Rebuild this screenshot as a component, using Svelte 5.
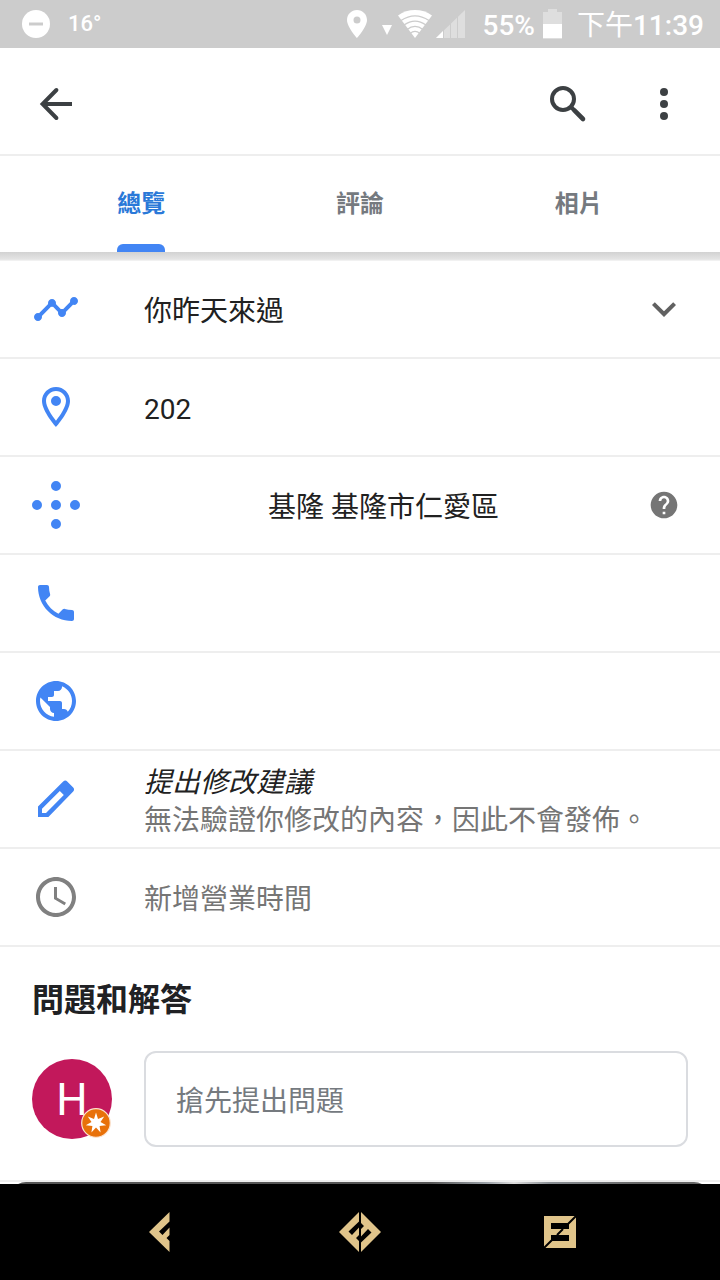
<script>
  const tabs = ["總覽", "評論", "相片"];
  let activeTab = $state(0);
  let question = $state("");

  const rows = [
    { icon: "timeline", text: "你昨天來過", trailing: "expand" },
    { icon: "place", text: "202" },
    { icon: "pluscode", text: "基隆 基隆市仁愛區", indent: true, trailing: "help" },
    { icon: "phone", label: "電話" },
    { icon: "globe", label: "網站" },
    { icon: "edit", text: "提出修改建議", italic: true, sub: "無法驗證你修改的內容，因此不會發佈。" },
    { icon: "clock", text: "新增營業時間", muted: true },
  ];

  const icons = {
    timeline:
      "M23 8c0 1.1-.9 2-2 2-.18 0-.35-.02-.51-.07l-3.56 3.55c.05.16.07.34.07.52 0 1.1-.9 2-2 2s-2-.9-2-2c0-.18.02-.36.07-.52l-2.55-2.55c-.16.05-.34.07-.52.07s-.36-.02-.52-.07l-4.55 4.56c.05.16.07.33.07.51 0 1.1-.9 2-2 2s-2-.9-2-2 .9-2 2-2c.18 0 .35.02.51.07l4.56-4.55C8.02 9.36 8 9.18 8 9c0-1.1.9-2 2-2s2 .9 2 2c0 .18-.02.36-.07.52l2.55 2.55c.16-.05.34-.07.52-.07s.36.02.52.07l3.55-3.56C19.02 8.35 19 8.18 19 8c0-1.1.9-2 2-2s2 .9 2 2z",
    place:
      "M12 2C8.13 2 5 5.13 5 9c0 5.25 7 13 7 13s7-7.75 7-13c0-3.87-3.13-7-7-7zM7 9c0-2.76 2.24-5 5-5s5 2.24 5 5c0 2.88-2.88 7.19-5 9.88C9.92 16.21 7 11.85 7 9zm5-2.5a2.5 2.5 0 1 0 0 5 2.5 2.5 0 0 0 0-5z",
    pluscode:
      "M12 0a2.5 2.5 0 0 1 0 5 2.5 2.5 0 0 1 0-5zM2.5 9.5a2.5 2.5 0 0 1 0 5 2.5 2.5 0 0 1 0-5zM12 9.5a2.5 2.5 0 0 1 0 5 2.5 2.5 0 0 1 0-5zM21.5 9.5a2.5 2.5 0 0 1 0 5 2.5 2.5 0 0 1 0-5zM12 19a2.5 2.5 0 0 1 0 5 2.5 2.5 0 0 1 0-5z",
    phone:
      "M6.62 10.79c1.44 2.83 3.76 5.14 6.59 6.59l2.2-2.2c.27-.27.67-.36 1.02-.24 1.12.37 2.33.57 3.57.57.55 0 1 .45 1 1V20c0 .55-.45 1-1 1-9.39 0-17-7.61-17-17 0-.55.45-1 1-1h3.5c.55 0 1 .45 1 1 0 1.25.2 2.45.57 3.57.11.35.03.74-.25 1.02l-2.2 2.2z",
    globe:
      "M12 2C6.48 2 2 6.48 2 12s4.48 10 10 10 10-4.48 10-10S17.52 2 12 2zm-1 17.93c-3.95-.49-7-3.85-7-7.93 0-.62.08-1.21.21-1.79L9 15v1c0 1.1.9 2 2 2v1.93zm6.9-2.54c-.26-.81-1-1.39-1.9-1.39h-1v-3c0-.55-.45-1-1-1H8v-2h2c.55 0 1-.45 1-1V7h2c1.1 0 2-.9 2-2v-.41c2.93 1.19 5 4.06 5 7.41 0 2.08-.8 3.97-2.1 5.39z",
    edit: "M3 21v-5.2L15.6 3.2c.7-.6 1.4-.6 2 0l3 3c.6.6.6 1.4 0 2L8.2 21H3zm2-2h2l8.900-9-2-2L5 16.900V19z",
    clock:
      "M11.99 2C6.47 2 2 6.48 2 12s4.47 10 9.99 10C17.52 22 22 17.52 22 12S17.52 2 11.99 2zM12 20c-4.42 0-8-3.58-8-8s3.58-8 8-8 8 3.58 8 8-3.58 8-8 8zm.5-13H11v6l5.25 3.15.75-1.23-4.5-2.67z",
    expand: "M16.59 8.59L12 13.17 7.41 8.59 6 10l6 6 6-6z",
    help: "M12 2C6.48 2 2 6.48 2 12s4.48 10 10 10 10-4.48 10-10S17.52 2 12 2zm1 17h-2v-2h2v2zm2.07-7.75l-.9.92C13.45 12.9 13 13.5 13 15h-2v-.5c0-1.1.45-2.1 1.17-2.83l1.24-1.26c.37-.36.59-.86.59-1.41 0-1.1-.9-2-2-2s-2 .9-2 2H8c0-2.21 1.79-4 4-4s4 1.79 4 4c0 .88-.36 1.68-.93 2.25z",
  };
</script>

{#snippet icon(name)}
  <svg class="icon {name}" viewBox="0 0 24 24" aria-hidden="true">
    <path d={icons[name]} fill-rule="evenodd" />
  </svg>
{/snippet}

<div class="screen">
  <div class="status">
    <svg width="28" height="28" viewBox="0 0 28 28">
      <circle cx="14" cy="14" r="14" fill="#fff" />
      <path d="M7 12.5h14v3H7z" fill="#ccc" />
    </svg>
    <span class="temp">16°</span>

    <div class="signals">
      <svg width="20" height="28" viewBox="0 0 20 28" fill="#fff">
        <path
          fill-rule="evenodd"
          d="M10 0C4.400 0 0 4.400 0 10c0 7.200 10 18 10 18s10-10.800 10-18C20 4.400 15.600 0 10 0zm0 6.500a3.500 3.500 0 1 1 0 7 3.500 3.500 0 0 1 0-7z"
        />
      </svg>
      <svg class="data" width="10" height="10" viewBox="0 0 10 10">
        <path d="M0 0h10L5 10z" fill="#fff" />
      </svg>
      <svg class="wifi" width="34" height="28" viewBox="0 0 34 28">
        <path d="M0 5.500C10-1.800 24-1.800 34 5.500L17 28z" fill="#fff" />
        <path
          d="M3 10.500c9-6 19-6 28 0M6 15c7-5 15-5 22 0M9 19.500c5-4 11-4 16 0M12 23.500c3-2.500 7-2.500 10 0"
          fill="none"
          stroke="#ccc"
          stroke-width="1.300"
        />
      </svg>
      <svg class="cell" width="29" height="28" viewBox="0 0 29 28">
        <path d="M29 0v28H0z" fill="#dedede" />
        <path d="M7 21v7H0z" fill="#fff" />
        <path d="M7.500 20v8M14.500 13v15M21.500 6v22" stroke="#ccc" />
      </svg>
    </div>
    <span class="reading">55%</span>
    <svg class="battery" width="19" height="30" viewBox="0 0 19 30">
      <path d="M5 0h9v3h5v27H0V3h5z" fill="#dedede" />
      <path d="M0 15h19v14H0z" fill="#fff" />
    </svg>
    <span class="reading"><span class="ampm">下午</span>11:39</span>
  </div>

  <header class="toolbar">
    <button class="tool back" aria-label="返回">
      <svg class="icon" viewBox="0 0 24 24">
        <path d="M20 12H5.500" />
        <path d="M12.200 5L5.300 12l6.900 7" stroke-linecap="round" />
      </svg>
    </button>
    <button class="tool" aria-label="搜尋">
      <svg class="icon" viewBox="0 0 24 24">
        <circle cx="9.500" cy="9.500" r="5.500" />
        <path d="M13.500 13.500l1.500 1.500" />
        <path d="M15.200 15.200l4.300 4.300" stroke-width="2.300" stroke-linecap="round" />
      </svg>
    </button>
    <button class="tool dots" aria-label="更多選項">
      <svg class="icon" viewBox="0 0 24 24">
        <circle cx="12" cy="6" r="2" />
        <circle cx="12" cy="12" r="2" />
        <circle cx="12" cy="18" r="2" />
      </svg>
    </button>
  </header>

  <nav class="tabs">
    {#each tabs as tab, i}
      <button class="tab" class:active={activeTab === i} onclick={() => (activeTab = i)}>
        <span>{tab}</span>
      </button>
    {/each}
  </nav>

  <main>
    <div class="shadow"></div>
    <ul class="rows">
      {#each rows as row}
        <li>
          <button class="row" aria-label={row.label}>
            {@render icon(row.icon)}
            <span class="body" class:indent={row.indent}>
              <span class:italic={row.italic} class:muted={row.muted}>{row.text ?? ""}</span>
              {#if row.sub}
                <span class="muted">{row.sub}</span>
              {/if}
            </span>
            {#if row.trailing}
              <span class="trailing">{@render icon(row.trailing)}</span>
            {/if}
          </button>
        </li>
      {/each}
    </ul>

    <section class="qa">
      <h2>問題和解答</h2>
      <div class="ask">
        <div class="avatar">
          H
          <svg class="guide" viewBox="0 0 30 30">
            <circle cx="15" cy="15" r="14.300" fill="#e8710a" stroke="#fbe3d0" stroke-width="1.200" />
            <path
              d="M15 4.500L17 10.900 23.200 8.500 19.500 14 25.200 17.300 18.600 17.900 19.600 24.500 15 19.600 10.400 24.500 11.400 17.900 4.800 17.300 10.500 14 6.800 8.500 13 10.900z"
              fill="#fff"
            />
          </svg>
        </div>
        <input type="text" placeholder="搶先提出問題" aria-label="搶先提出問題" bind:value={question} />
      </div>
    </section>
    <div class="photos"><div class="photo"></div></div>
  </main>

  <footer class="navbar">
    <button aria-label="上一頁">
      <svg width="42" height="40" viewBox="0 0 42 40">
        <path d="M10 20L30.500 0v9.500L20 19.500l3.500 3.500 7-7.500V23l-3 3 3 3v11z" />
      </svg>
    </button>
    <button aria-label="主畫面">
      <svg width="42" height="40" viewBox="0 0 42 40">
        <path d="M0 20L20 0v9.500L9.500 19.500 13 23l7-7.500V23l-3 3 3 3v11z" />
        <path d="M42 20L22 40v-9.500l10.500-10L29 17l-7 7.500V17l3-3-3-3V0z" />
      </svg>
    </button>
    <button aria-label="最近使用">
      <svg width="32" height="32" viewBox="0 0 32 32">
        <path d="M0 0h32v32H0z" />
        <path d="M7 7h18v6H7zM7 19h18v6H7z" fill="#000" />
        <path d="M32 0l-8 8M19 13l-6 6M8 24l-8 8" stroke="#000" stroke-width="2" />
      </svg>
    </button>
  </footer>
</div>

<style>
  :global(body) {
    margin: 0;
    background: #fff;
  }

  .screen {
    display: flex;
    flex-direction: column;
    height: 100vh;
    font-family: Roboto, "Noto Sans CJK TC", sans-serif;
    font-size: 28px;
    color: #212121;
    overflow: hidden;
  }

  button {
    margin: 0;
    padding: 0;
    border: none;
    background: none;
    font: inherit;
    color: inherit;
    cursor: pointer;
  }

  svg {
    display: block;
    flex: none;
  }

  .icon {
    width: 48px;
    height: 48px;
    fill: #4285f4;
  }

  .status {
    display: flex;
    flex: none;
    align-items: center;
    height: 48px;
    padding: 0 16px 0 22px;
    background: #ccc;
    color: #fff;
    font-weight: 500;
    line-height: 48px;
    white-space: nowrap;
  }

  .temp {
    margin-left: 18px;
    font-size: 22px;
  }

  .reading {
    padding-top: 4px;
  }

  .ampm {
    font-weight: 400;
  }

  .signals {
    display: flex;
    align-items: center;
    margin-left: auto;
    margin-right: 17px;
  }

  .data {
    align-self: flex-end;
    margin: 0 6px 3px 15px;
  }

  .cell {
    margin-left: 4px;
  }

  .battery {
    margin: 0 15px 0 8px;
  }

  .toolbar {
    display: flex;
    flex: none;
    align-items: center;
    gap: 48px;
    padding: 32px 32px 26px;
    border-bottom: 2px solid #eee;
  }

  .tool .icon {
    fill: none;
    stroke: #3c4043;
    stroke-width: 2;
  }

  .back {
    margin-right: auto;
  }

  .tool.dots .icon {
    fill: #3c4043;
    stroke: none;
  }

  .tabs {
    display: flex;
    flex: none;
    height: 96px;
    padding: 0 32px;
  }

  .tab {
    display: flex;
    flex: 1;
    justify-content: center;
    font-size: 24px;
    font-weight: 700;
    line-height: 96px;
    color: #757a7f;
  }

  .tab span {
    display: flex;
    flex-direction: column;
    height: 96px;
  }

  .tab.active {
    color: #2a79d8;
  }

  .tab.active span::after {
    content: "";
    height: 8px;
    margin-top: -8px;
    border-radius: 6px 6px 0 0;
    background: #4285f4;
  }

  main {
    flex: 1;
    min-height: 0;
    overflow: hidden;
  }

  .shadow {
    height: 9px;
    background: linear-gradient(#d2d2d2, #e4e4e4 80%, #f6f6f6);
  }

  .rows {
    margin: 0;
    padding: 0;
    list-style: none;
  }

  .row {
    display: flex;
    align-items: center;
    width: 100%;
    height: 98px;
    padding: 0 32px;
    border-bottom: 2px solid #eee;
    text-align: left;
    line-height: 38px;
  }

  .body {
    display: flex;
    flex: 1;
    flex-direction: column;
    padding: 5px 0 0 64px;
  }

  .indent {
    padding-left: 188px;
  }

  .italic {
    font-style: italic;
  }

  .muted {
    color: #757575;
  }

  .clock {
    fill: #808080;
  }

  .trailing {
    display: flex;
    justify-content: center;
    width: 48px;
  }

  .expand {
    fill: #616161;
  }

  .help {
    width: 32px;
    height: 32px;
    fill: #757575;
  }

  .qa {
    padding: 29px 32px 33px;
    border-bottom: 2px solid #eee;
  }

  h2 {
    margin: 0 0 27px;
    font-size: 32px;
    font-weight: 700;
    line-height: 48px;
    color: #202124;
  }

  .ask {
    display: flex;
    align-items: center;
    gap: 32px;
  }

  .avatar {
    position: relative;
    flex: none;
    width: 80px;
    height: 80px;
    border-radius: 50%;
    background: #c2185b;
    color: #fff;
    font-size: 44px;
    line-height: 82px;
    text-align: center;
  }

  .guide {
    position: absolute;
    right: 1px;
    bottom: 1px;
    width: 30px;
    height: 30px;
  }

  input {
    box-sizing: border-box;
    flex: 1;
    min-width: 0;
    height: 96px;
    padding: 4px 30px 0;
    border: 2px solid #dadce0;
    border-radius: 12px;
    background: #fff;
    font: inherit;
    color: #202124;
  }

  input::placeholder {
    color: #757a7f;
    opacity: 1;
  }

  .photos {
    padding: 0 10px;
  }

  .photo {
    height: 240px;
    border-radius: 16px;
    background: linear-gradient(90deg, #555 0 60%, #9aa0a6 68%, #ddd 72%, #8a8f94 77%, #666 90%);
  }

  .navbar {
    display: flex;
    flex: none;
    height: 96px;
    padding: 0 60px;
    background: #000;
  }

  .navbar button {
    display: flex;
    flex: 1;
    align-items: center;
    justify-content: center;
  }

  .navbar svg {
    fill: #e0c48a;
  }
</style>
